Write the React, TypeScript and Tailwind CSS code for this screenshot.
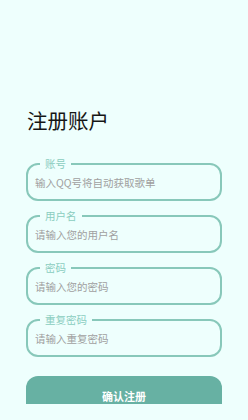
import React from "react";

const fields = [
    { label: "账号", placeholder: "输入QQ号将自动获取歌单" },
    { label: "用户名", placeholder: "请输入您的用户名" },
    { label: "密码", placeholder: "请输入您的密码" },
    { label: "重复密码", placeholder: "请输入重复密码" },
];

export default function App() {
    return (
        <div className="w-full h-[420px] bg-[#eefffd]" style={{ fontFamily: '"Noto Sans CJK SC", "Noto Sans", sans-serif' }}>
            <div className="h-[404px] overflow-hidden px-[26px] pt-[108px]">
                {/* Title */}
                <h1 className="text-[20.5px] leading-[24px] text-[#161616] pl-[1px]">注册账户</h1>

                {/* Form fields */}
                <div className="mt-[31px] flex flex-col gap-[14px]">
                    {fields.map((f) => (
                        <div key={f.label} className="relative h-[38px] rounded-[12px] border-2 border-[#88c8ba]">
                            <span className="absolute -top-[8px] left-[12px] px-[5px] bg-[#eefffd] text-[10.5px] leading-[14px] text-[#8acdbf]">
                                {f.label}
                            </span>
                            <input
                                className="w-full h-full bg-transparent outline-none pl-[7px] text-[10.5px] text-[#555] placeholder:text-[#a0a0a0]"
                                placeholder={f.placeholder}
                            />
                        </div>
                    ))}
                </div>

                {/* Submit */}
                <button className="mt-[19px] w-full h-[40px] rounded-[12px] bg-[#67b1a3] text-white text-[11px] font-bold">
                    确认注册
                </button>
            </div>
        </div>
    );
}
